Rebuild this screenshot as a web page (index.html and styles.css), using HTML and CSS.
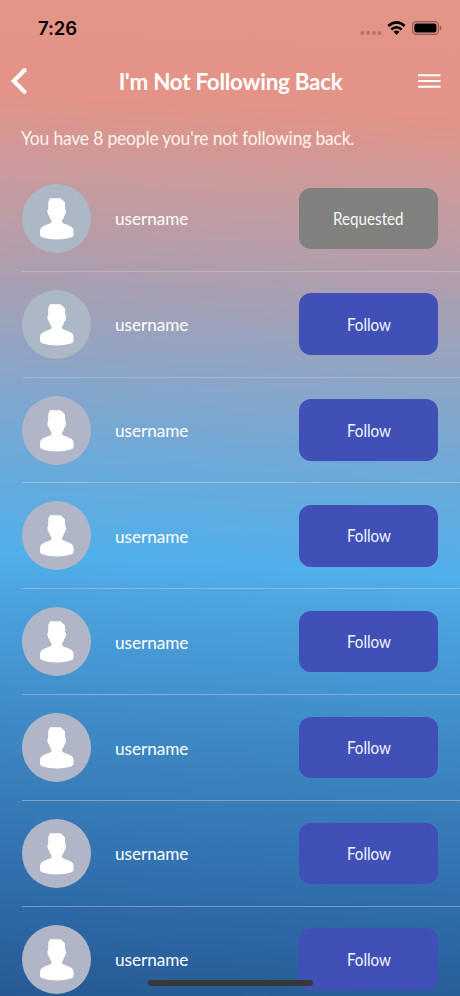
FILE: index.html
```html
<!DOCTYPE html>
<html lang="en">
<head>
<meta charset="utf-8">
<title>I'm Not Following Back</title>
<link rel="stylesheet" href="styles.css">
</head>
<body>
<svg class="defs" width="0" height="0" aria-hidden="true">
  <symbol id="person" viewBox="0 0 69 69">
    <path d="M28 14.200 H38.500 L41 16.400 L43 18.500 L43.200 25 Q44.500 25.800 43.900 28.500 Q43.400 31 42.400 31.600 Q41.800 34.600 40 36.800 V38.200 Q41.500 39.800 45 40.800 Q51.600 42.800 51.600 47.200 V50.800 Q51.600 52.400 49 53.400 Q42.500 55.500 34.700 55.500 Q27 55.500 20.500 53.400 Q18 52.400 18 50.800 V47.200 Q18 42.800 24.500 40.800 Q28 39.800 29.500 38.200 V36.800 Q27.700 34.600 27.100 31.600 Q26 31 25.500 28.500 Q25 25.800 26.200 25 L26.300 18 Z"/>
  </symbol>
</svg>
<div class="screen">
  <header class="status">
    <span class="time">7:26</span>
    <div class="indicators">
      <svg class="dots" width="22" height="4" viewBox="0 0 22 4"><circle cx="2.400" cy="2" r="1.900"/><circle cx="8.100" cy="2" r="1.900"/><circle cx="13.900" cy="2" r="1.900"/><circle cx="19.600" cy="2" r="1.900"/></svg>
      <svg class="wifi" width="19" height="14" viewBox="0 0 19 14"><path class="arc" d="M1.300 5 Q9.500 -2.200 17.700 5 M4.300 8.500 Q9.500 4 14.700 8.500"/><path d="M9.500 13.700 L6.500 10.700 Q9.500 8.500 12.500 10.700 Z"/></svg>
      <svg class="battery" width="30" height="14" viewBox="0 0 30 14"><rect class="case" x=".6" y=".6" width="25.800" height="12.800" rx="3.600"/><rect x="2.400" y="2.400" width="22" height="9.200" rx="2"/><path class="cap" d="M27.800 4.600 Q29.500 5.200 29.500 7 Q29.500 8.800 27.800 9.400 Z"/></svg>
    </div>
  </header>
  <nav class="bar">
    <svg class="back" width="18" height="28" viewBox="0 0 18 28"><path d="M15.500 3.300 L4.800 14 L15.500 24.700"/></svg>
    <h1 class="title">I'm Not Following Back</h1>
    <svg class="menu" width="23" height="14" viewBox="0 0 23 14"><path d="M0 1.200 H22.500 M0 7 H22.500 M0 12.800 H22.500"/></svg>
  </nav>
  <p class="summary">You have 8 people you're not following back.</p>
  <ul class="list">
    <li class="row"><svg class="avatar cool"><use href="#person"/></svg><span class="name">username</span><button class="btn requested"><span class="label">Requested</span></button></li>
    <li class="row"><svg class="avatar cool"><use href="#person"/></svg><span class="name">username</span><button class="btn"><span class="label">Follow</span></button></li>
    <li class="row"><svg class="avatar"><use href="#person"/></svg><span class="name">username</span><button class="btn"><span class="label">Follow</span></button></li>
    <li class="row"><svg class="avatar"><use href="#person"/></svg><span class="name">username</span><button class="btn"><span class="label">Follow</span></button></li>
    <li class="row"><svg class="avatar"><use href="#person"/></svg><span class="name">username</span><button class="btn"><span class="label">Follow</span></button></li>
    <li class="row"><svg class="avatar"><use href="#person"/></svg><span class="name">username</span><button class="btn"><span class="label">Follow</span></button></li>
    <li class="row"><svg class="avatar"><use href="#person"/></svg><span class="name">username</span><button class="btn"><span class="label">Follow</span></button></li>
    <li class="row"><svg class="avatar"><use href="#person"/></svg><span class="name">username</span><button class="btn"><span class="label">Follow</span></button></li>
  </ul>
  <div class="home"></div>
</div>
</body>
</html>
```
FILE: styles.css
```css
* { box-sizing: border-box; }
body { margin: 0; font-family: Lato, sans-serif; color: #fff; }
.defs { display: block; height: 0; }
.screen {
  position: relative;
  width: 460px;
  height: 996px;
  overflow: hidden;
  background: linear-gradient(183deg, #e59488 0, #e39387 11.5%, #cd9a9a 18%, #af9eae 28%, #8aa5c8 38.5%, #68aadb 48%, #51afeb 56.500%, #4ba2dd 61%, #3d88c4 74%, #2f6dab 89%, #275a95 100%);
}
.status { height: 56px; padding: 0 18px 0 38px; display: flex; justify-content: space-between; align-items: center; }
.time { font: 600 18.500px/22px Inter, sans-serif; color: #000; letter-spacing: -.1px; }
.indicators { display: flex; align-items: center; }
.dots { fill: #ba7068; margin: 9px 5px 0 0; }
.wifi { margin-right: 6px; }
.wifi .arc { fill: none; stroke: #000; stroke-width: 2.600; }
.battery .case { fill: none; stroke: #8c5a54; stroke-width: 1.100; }
.battery .cap { fill: #8c5a54; }
.bar { height: 50px; padding: 0 19px 0 9px; display: flex; align-items: center; justify-content: space-between; }
.back { fill: none; stroke: #fff; stroke-width: 4.200; stroke-linecap: round; stroke-linejoin: miter; }
.title { margin: 0 0 0 16px; font-size: 23px; line-height: 28px; font-weight: 700; letter-spacing: -.3px; white-space: nowrap; transform: scaleX(.977); }
.menu { stroke: #fff; stroke-width: 2; }
.summary { margin: 0; height: 59.900px; padding: 19px 0 0 21px; font-size: 19px; line-height: 26px; letter-spacing: -.2px; white-space: nowrap; color: #fff4ec; transform: scaleX(.92); transform-origin: 21px 50%; }
.list { margin: 0; padding: 0 0 0 22px; list-style: none; }
.row { height: 105.850px; padding-right: 22px; display: flex; align-items: center; border-bottom: 1px solid rgba(205, 205, 215, .48); }
.avatar { width: 69px; height: 69px; border-radius: 50%; background: #b0b6c7; fill: #fff; }
.avatar.cool { background: #adb8c6; }
.name { margin-left: 24px; flex: 1; font-size: 17.200px; line-height: 24px; padding-top: 2px; letter-spacing: -.05px; }
.btn { width: 139px; height: 61.500px; padding: 0; border: 0; border-radius: 12px; background: #4050b6; color: #f5f6ff; font: 400 16.500px/22px Lato, sans-serif; }
.label { display: inline-block; padding-top: 1px; transform: scaleX(.92); }
.btn.requested { background: #80817f; color: #f8f8f8; }
.home { position: absolute; left: 148px; bottom: 10px; width: 165px; height: 6px; border-radius: 3px; background: #36383a; }
```
